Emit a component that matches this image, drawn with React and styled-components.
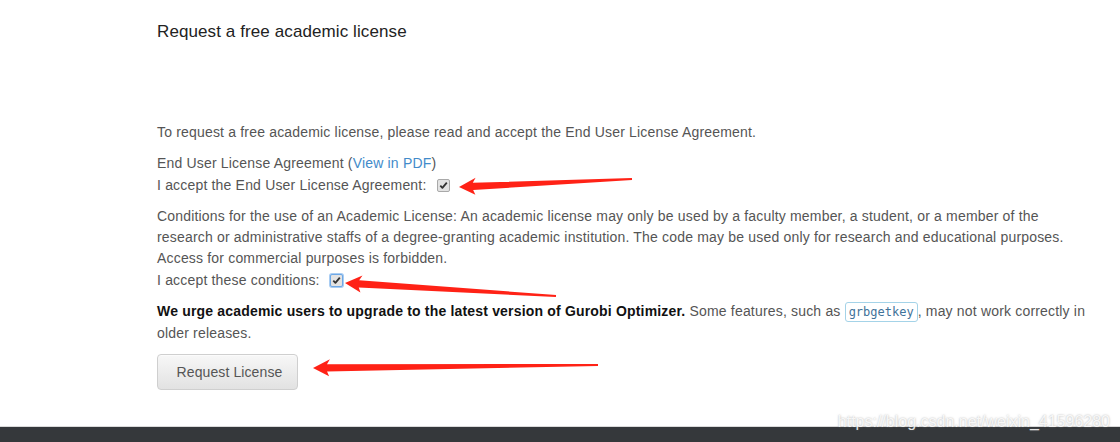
import React from 'react'
import styled, { createGlobalStyle } from 'styled-components'

const Global = createGlobalStyle`
    html, body {
        margin: 0;
        padding: 0;
        background: #fff;
        overflow: hidden;
    }
    body {
        font-family: "Liberation Sans", Arial, Helvetica, sans-serif;
    }
`

const Page = styled.div`
    position: relative;
    height: 442px;
    display: flex;
    flex-direction: column;
`

const Main = styled.main`
    flex: 1;
    padding: 21px 0 0 157px;
`

const Content = styled.div`
    width: 940px;
    font-size: 14px;
    line-height: 21px;
    letter-spacing: 0.18px;
    color: #555;
`

const Title = styled.h3`
    margin: 0 0 79px;
    font-size: 17px;
    line-height: 22px;
    font-weight: 400;
    letter-spacing: 0.1px;
    color: #222;
`

const Para = styled.p`
    margin: 0 0 10px;
`

const Line = styled.div`
    line-height: ${p => p.tall ? '22px' : '21px'};
`

const PdfLink = styled.a`
    color: #428bca;
    text-decoration: none;
`

const Check = styled.span`
    display: inline-block;
    box-sizing: border-box;
    width: 13px;
    height: 13px;
    margin-left: 6px;
    vertical-align: -2px;
    border: 1px solid ${p => p.focused ? '#6ea8e6' : '#a9a9a9'};
    border-radius: 2px;
    background: #e3e3e3;
    box-shadow: ${p => p.focused ? '0 0 0 1px #a9cdf3' : 'none'};
    position: relative;

    svg {
        position: absolute;
        left: 1px;
        top: 1px;
    }
`

const Strong = styled.strong`
    color: #111;
`

const Code = styled.code`
    font-family: "DejaVu Sans Mono", "Liberation Mono", monospace;
    font-size: 12px;
    letter-spacing: 0;
    color: #3f7299;
    padding: 2px 3px;
    border: 1px solid #a4d3e8;
    border-radius: 3px;
    background: #fff;
`

const Button = styled.button`
    width: 141px;
    height: 36px;
    padding: 0 0 0 4px;
    font-family: inherit;
    font-size: 14px;
    letter-spacing: 0.1px;
    color: #555;
    border: 1px solid #cfcfcf;
    border-radius: 4px;
    background: linear-gradient(#f7f7f7, #e2e2e2);
    box-shadow: inset 0 1px 0 rgba(255, 255, 255, 0.5);
`

const Footer = styled.footer`
    height: 15px;
    border-top: 1px solid #dadada;
    background: #35383b;
`

const Overlay = styled.svg`
    position: absolute;
    left: 0;
    top: 0;
    pointer-events: none;
`

const Watermark = styled.div`
    position: absolute;
    right: 10px;
    bottom: 11px;
    font-size: 16px;
    color: rgba(255, 255, 255, 0.85);
    text-shadow: 0 0 2px rgba(120, 120, 120, 0.6);
`

function Tick() {
    return (
        <svg width="9" height="9" viewBox="0 0 9 9">
            <path d="M1.3 4.6 L3.4 6.8 L7.8 1.6" fill="none" stroke="#333" strokeWidth="1.8" strokeLinejoin="round" />
        </svg>
    )
}

function arrowPoints(tip, tail) {
    const dx = tail[0] - tip[0]
    const dy = tail[1] - tip[1]
    const len = Math.hypot(dx, dy)
    const ux = dx / len
    const uy = dy / len
    const nx = -uy
    const ny = ux
    const at = (d, w) => [tip[0] + ux * d + nx * w, tip[1] + uy * d + ny * w]
    const pts = [
        tip,
        at(17, -8.5),
        at(14, -3.6),
        [tail[0] - nx * 1, tail[1] - ny * 1],
        [tail[0] + nx * 1, tail[1] + ny * 1],
        at(14, 3.6),
        at(16, 8.5),
    ]
    return pts.map(p => p.join(',')).join(' ')
}

const arrows = [
    { tip: [459, 187], tail: [632, 179] },
    { tip: [345, 283], tail: [556, 296] },
    { tip: [313, 368], tail: [598, 365] },
]

export default function App() {
    return (
        <Page>
            <Global />
            <Main>
                <Content>
                    <Title>Request a free academic license</Title>
                    <Para>To request a free academic license, please read and accept the End User License Agreement.</Para>
                    <Para as="div">
                        <Line>End User License Agreement (<PdfLink href="#">View in PDF</PdfLink>)</Line>
                        <Line tall>I accept the End User License Agreement: <Check><Tick /></Check></Line>
                    </Para>
                    <Para as="div">
                        <Line>Conditions for the use of an Academic License: An academic license may only be used by a faculty member, a student, or a member of the research or administrative staffs of a degree-granting academic institution. The code may be used only for research and educational purposes. Access for commercial purposes is forbidden.</Line>
                        <Line tall>I accept these conditions: <Check focused><Tick /></Check></Line>
                    </Para>
                    <Para>
                        <Strong>We urge academic users to upgrade to the latest version of Gurobi Optimizer.</Strong> Some features, such as <Code>grbgetkey</Code>, may not work correctly in older releases.
                    </Para>
                    <Button>Request License</Button>
                </Content>
            </Main>
            <Footer />
            <Overlay width="1120" height="442">
                {arrows.map((a, i) => (
                    <polygon key={i} points={arrowPoints(a.tip, a.tail)} fill="#ff2216" />
                ))}
            </Overlay>
            <Watermark>https://blog.csdn.net/weixin_41596280</Watermark>
        </Page>
    )
}
